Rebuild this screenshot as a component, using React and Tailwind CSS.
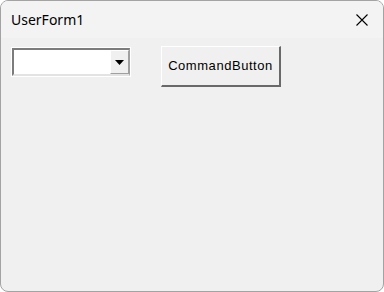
import React from 'react';

const ComboBox = () => {
  return (
    <div className="w-[120px] h-[30px] bg-white p-px">
      <div className="h-full flex border-t-2 border-l-2 border-[#7c7c7c] border-r border-r-[#a0a0a0] border-b-2 border-b-[#e3e3e3] bg-white">
        <div className="flex-1" />
        <div className="w-[19px] h-full flex items-center justify-center bg-[#f0f0f0] border-t border-l border-white border-r border-b border-r-[#a0a0a0] border-b-[#a0a0a0]">
          <svg width="9" height="5" viewBox="0 0 9 5">
            <path d="M0 0 H9 L4.5 5 Z" fill="#000" />
          </svg>
        </div>
      </div>
    </div>
  );
};

const CommandButton = () => {
  return (
    <button className="w-[120px] h-[41px] flex items-center justify-center bg-[#f0f0f0] border-t border-l border-white border-r-2 border-b-2 border-r-[#696969] border-b-[#696969] font-['Liberation_Sans',Arial,sans-serif] text-[13px] tracking-[0.55px] text-black">
      CommandButton
    </button>
  );
};

export default function App() {
  return (
    <div className="w-[384px] h-[292px] bg-white">
      <div className="w-full h-full rounded-lg border border-[#a3a3a3] bg-[#f0f0f0] overflow-hidden flex flex-col">
        {/* title bar */}
        <div className="h-[37px] shrink-0 flex items-center justify-between pl-[10px] pr-[15px] bg-[#f3f3f3]">
          <span className="font-['Noto_Sans',sans-serif] text-[14px] text-black">UserForm1</span>
          <svg width="12" height="12" viewBox="0 0 12 12">
            <path d="M0.5 0.5 L11.5 11.5 M11.5 0.5 L0.5 11.5" stroke="#000" strokeWidth="1.1" />
          </svg>
        </div>

        {/* form body */}
        <div className="flex-1 flex items-start pl-[10px] pt-[9px] gap-[30px]">
          <ComboBox />
          <div className="-mt-px">
            <CommandButton />
          </div>
        </div>
      </div>
    </div>
  );
}
